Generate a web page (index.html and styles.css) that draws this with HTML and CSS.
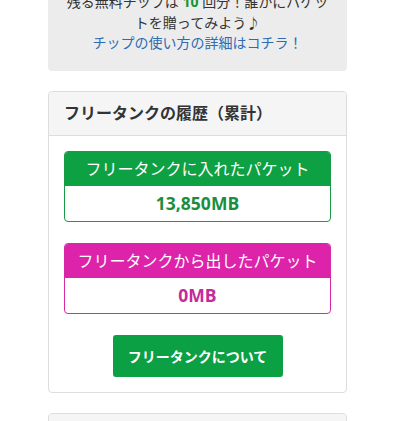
FILE: index.html
```html
<!DOCTYPE html>
<html lang="ja">
<head>
<meta charset="utf-8">
<link rel="stylesheet" href="styles.css">
</head>
<body>
<div class="col">
  <div class="well">
    <p class="well-text">残る無料チップは <b class="num">10</b> 回分！誰かにパケットを贈ってみよう♪</p>
    <p class="well-link">チップの使い方の詳細はコチラ！</p>
  </div>

  <div class="panel">
    <div class="panel-heading">フリータンクの履歴（累計）</div>
    <div class="panel-body">
      <div class="stat stat-in">
        <div class="stat-head">フリータンクに入れたパケット</div>
        <div class="stat-val">13,850MB</div>
      </div>
      <div class="stat stat-out">
        <div class="stat-head">フリータンクから出したパケット</div>
        <div class="stat-val">0MB</div>
      </div>
      <div class="btn-row"><span class="btn">フリータンクについて</span></div>
    </div>
  </div>

  <div class="panel">
    <div class="panel-heading">&nbsp;</div>
  </div>
</div>
</body>
</html>
```
FILE: styles.css
```css
html, body {
  margin: 0;
  padding: 0;
  background: #fff;
  overflow: hidden;
}
body {
  font-family: "Open Sans", "Noto Sans CJK JP", sans-serif;
  color: #333;
  font-size: 14px;
}
.col {
  width: 299px;
  margin-left: 48px;
}
.well {
  margin-top: -23px;
  background: #ececec;
  border-radius: 4px;
  padding: 15px 16px 17px;
  text-align: center;
  margin-bottom: 20px;
}
.well p {
  margin: 0;
  line-height: 20.5px;
}
.num {
  color: #13952f;
  font-weight: 700;
}
.well-link {
  color: #2d6bb3;
}
.panel {
  border: 1px solid #ddd;
  border-radius: 4px;
  margin-bottom: 20px;
  background: #fff;
}
.panel-heading {
  background: #f5f5f5;
  border-bottom: 1px solid #ddd;
  border-radius: 3px 3px 0 0;
  padding: 10px 15px;
  font-size: 16px;
  font-weight: 700;
  line-height: 23px;
  color: #333;
}
.panel-body {
  padding: 15px;
}
.stat {
  border: 1px solid;
  border-radius: 4px;
  text-align: center;
  margin-bottom: 21px;
  overflow: hidden;
}
.stat-head {
  color: #fff;
  font-size: 16px;
  line-height: 34px;
  height: 34px;
}
.stat-val {
  font-weight: 700;
  font-size: 17.5px;
  line-height: 35px;
  height: 35px;
}
.stat-in { border-color: #1a9a45; }
.stat-in .stat-head { background: #0ea143; }
.stat-in .stat-val { color: #1b8e3d; }
.stat-out { border-color: #d52aa6; }
.stat-out .stat-head { background: #dc23a9; }
.stat-out .stat-val { color: #c42b9a; }
.btn-row {
  display: flex;
  justify-content: center;
}
.btn {
  display: flex;
  align-items: center;
  justify-content: center;
  width: 170px;
  height: 42px;
  background: #0aa043;
  border-radius: 3px;
  color: #fff;
  font-weight: 700;
  font-size: 14px;
}
```
